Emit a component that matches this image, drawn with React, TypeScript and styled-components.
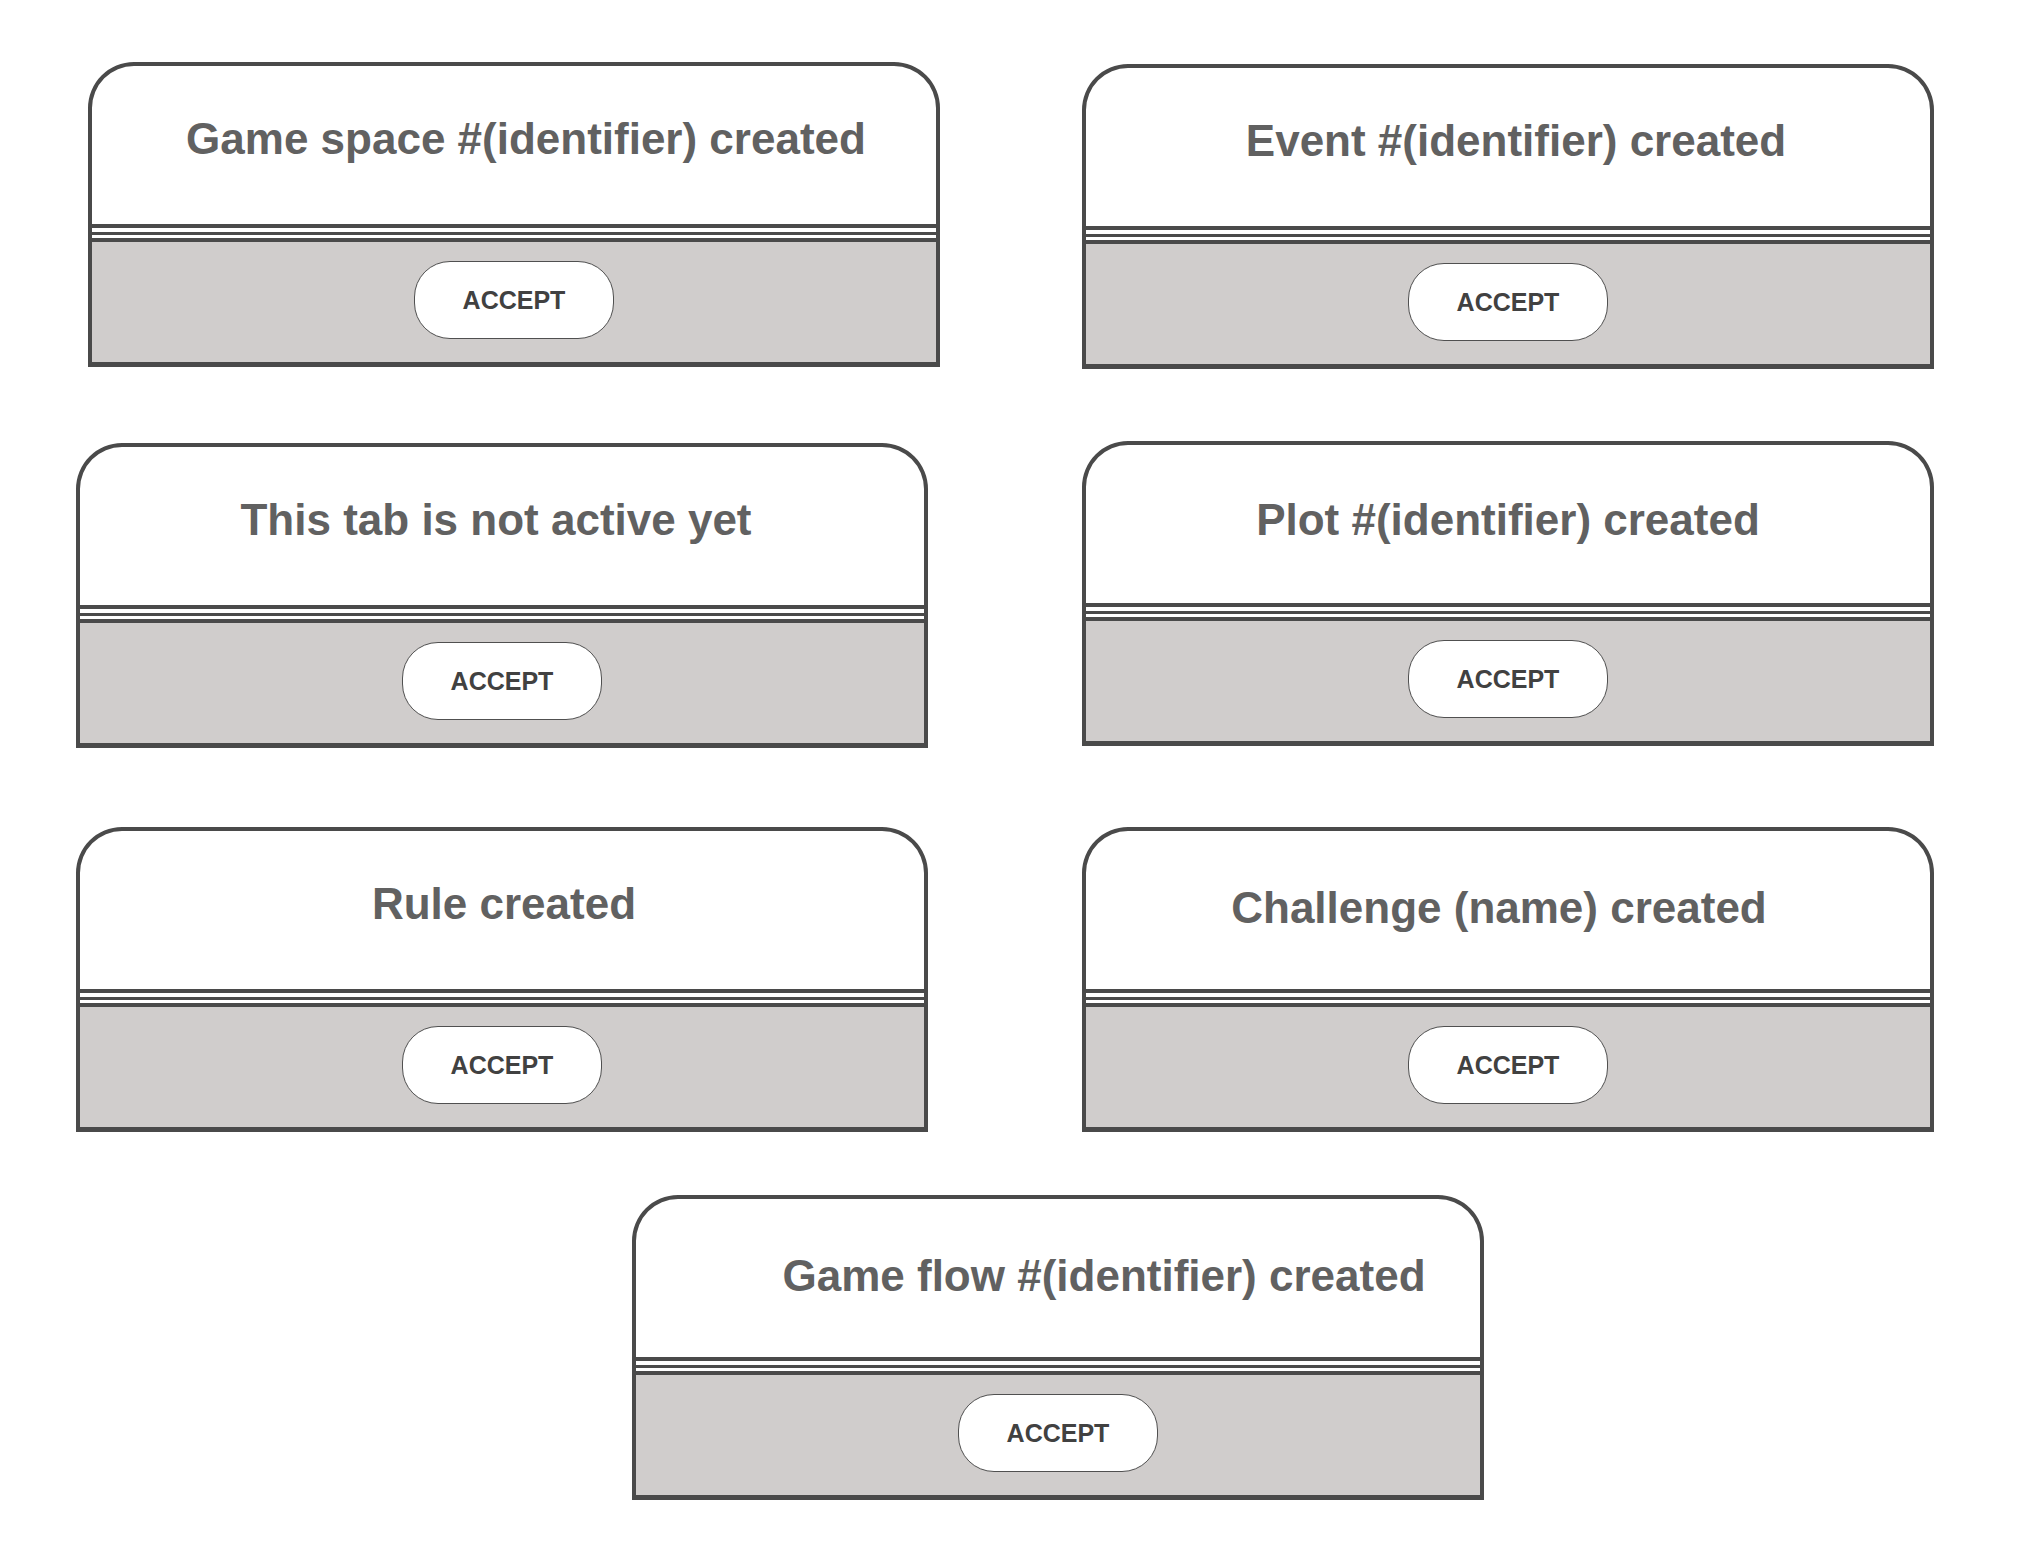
import React from "react";
import styled, { createGlobalStyle } from "styled-components";

const GlobalStyle = createGlobalStyle`
    html, body {
        margin: 0;
        padding: 0;
        background: #ffffff;
    }
    body {
        font-family: "Liberation Sans", Arial, sans-serif;
    }
`;

const Page = styled.main`
    display: flex;
    flex-direction: column;
    padding: 62px 0 0 76px;
    width: 2030px;
    box-sizing: border-box;
`;

const Row = styled.div<{ $top?: number }>`
    display: grid;
    grid-template-columns: 852px 852px;
    column-gap: 154px;
    align-items: start;
    margin-top: ${({ $top }) => $top || 0}px;
`;

const Card = styled.section<{ $dx?: number; $dy?: number }>`
    width: 852px;
    box-sizing: border-box;
    margin-left: ${({ $dx }) => $dx || 0}px;
    margin-top: ${({ $dy }) => $dy || 0}px;
    border: 4px solid #4a4a4a;
    border-bottom-width: 5px;
    border-radius: 46px 46px 0 0;
    background: #ffffff;
    overflow: hidden;
    display: flex;
    flex-direction: column;
`;

const Header = styled.div<{ $shift?: number; $drop?: number }>`
    height: 158px;
    box-sizing: border-box;
    padding-top: ${({ $drop }) => 48 + ($drop || 0)}px;
    padding-left: ${({ $shift }) => ($shift && $shift > 0 ? $shift * 2 : 0)}px;
    padding-right: ${({ $shift }) => ($shift && $shift < 0 ? -$shift * 2 : 0)}px;
    text-align: center;
`;

const Title = styled.h2`
    margin: 0;
    font-size: 44px;
    line-height: 50px;
    font-weight: 700;
    color: #616161;
    white-space: nowrap;
`;

const Divider = styled.div`
    height: 18px;
    background: linear-gradient(
        to bottom,
        #4a4a4a 0 4px,
        #ffffff 4px 8px,
        #4a4a4a 8px 11px,
        #ffffff 11px 14px,
        #4a4a4a 14px 18px
    );
`;

const Footer = styled.div`
    height: 120px;
    box-sizing: border-box;
    padding-bottom: 4px;
    background: #d0cdcc;
    display: flex;
    align-items: center;
    justify-content: center;
`;

const AcceptButton = styled.button`
    width: 200px;
    height: 78px;
    box-sizing: border-box;
    border: 1.5px solid #505050;
    border-radius: 36px;
    background: #ffffff;
    color: #414141;
    font-family: "Liberation Sans", Arial, sans-serif;
    font-size: 25px;
    font-weight: 700;
    padding: 0;
    cursor: pointer;
`;

type Notice = {
    title: string;
    dx?: number;
    dy?: number;
    shift?: number;
    drop?: number;
};

const rows: { top: number; cards: Notice[] }[] = [
    {
        top: 0,
        cards: [
            { title: "Game space #(identifier) created", dx: 12, shift: 12 },
            { title: "Event #(identifier) created", dy: 2, shift: 8 },
        ],
    },
    {
        top: 72,
        cards: [
            { title: "This tab is not active yet", dy: 2, shift: -6 },
            { title: "Plot #(identifier) created", drop: 2 },
        ],
    },
    {
        top: 79,
        cards: [
            { title: "Rule created", shift: 2 },
            { title: "Challenge (name) created", shift: -9, drop: 4 },
        ],
    },
    {
        top: 63,
        cards: [{ title: "Game flow #(identifier) created", dx: 556, shift: 46, drop: 4 }],
    },
];

const NoticeCard = ({ title, dx, dy, shift, drop }: Notice) => (
    <Card $dx={dx} $dy={dy}>
        <Header $shift={shift} $drop={drop}>
            <Title>{title}</Title>
        </Header>
        <Divider />
        <Footer>
            <AcceptButton>ACCEPT</AcceptButton>
        </Footer>
    </Card>
);

export default function App() {
    return (
        <>
            <GlobalStyle />
            <Page>
                {rows.map((row, i) => (
                    <Row key={i} $top={row.top}>
                        {row.cards.map((card) => (
                            <NoticeCard key={card.title} {...card} />
                        ))}
                    </Row>
                ))}
            </Page>
        </>
    );
}
